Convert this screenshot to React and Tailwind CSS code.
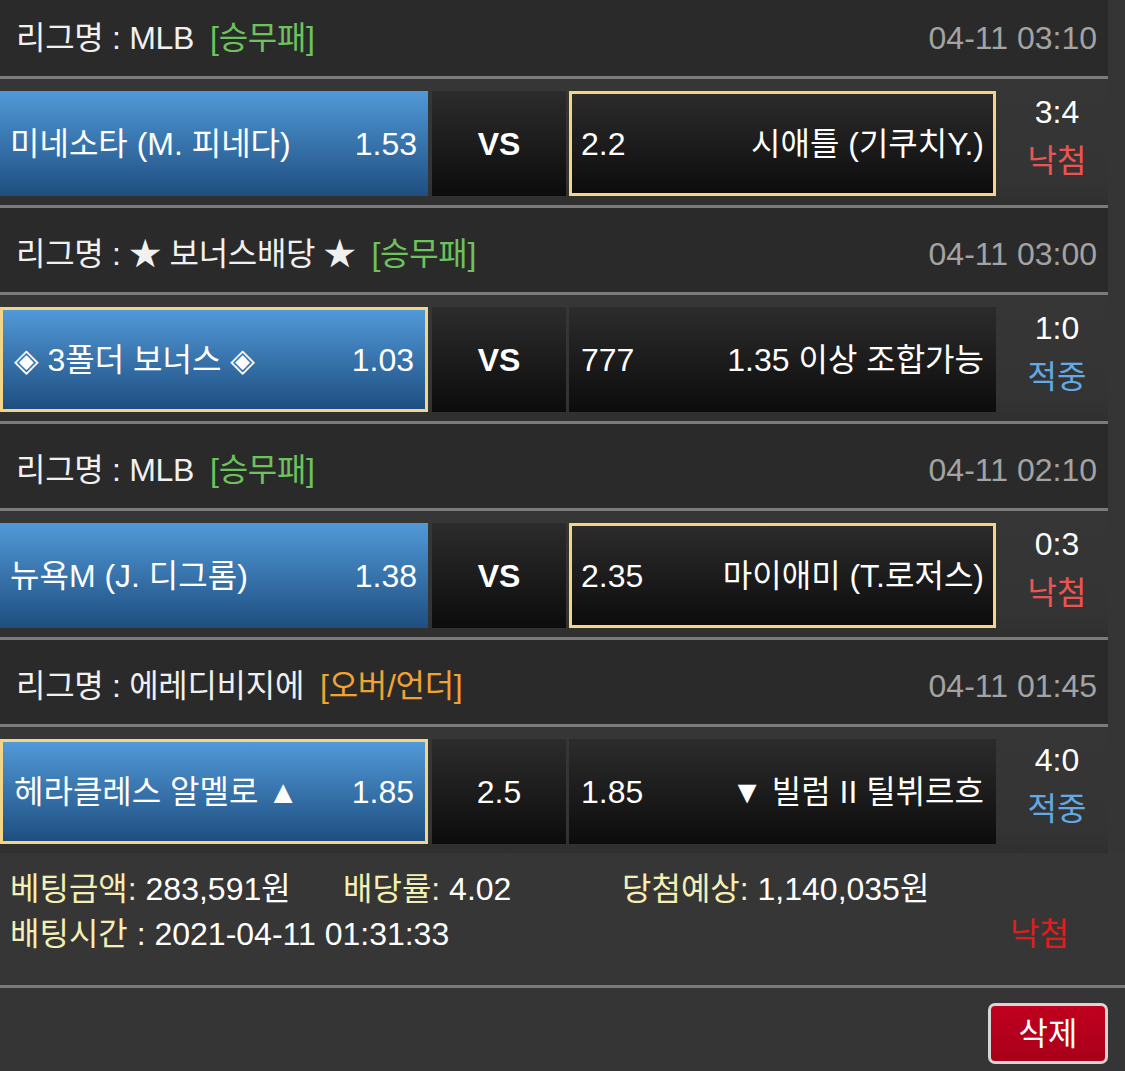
import React from "react";

const matches = [
  {
    league: "MLB",
    type: "[승무패]",
    typeColor: "text-[#6cc35c]",
    date: "04-11 03:10",
    home: "미네소타 (M. 피네다)",
    homeOdd: "1.53",
    mid: "VS",
    awayOdd: "2.2",
    away: "시애틀 (기쿠치Y.)",
    pick: "away",
    score: "3:4",
    result: "낙첨",
  },
  {
    league: "★ 보너스배당 ★",
    type: "[승무패]",
    typeColor: "text-[#6cc35c]",
    date: "04-11 03:00",
    home: "◈ 3폴더 보너스 ◈",
    homeOdd: "1.03",
    mid: "VS",
    awayOdd: "777",
    away: "1.35 이상 조합가능",
    pick: "home",
    score: "1:0",
    result: "적중",
  },
  {
    league: "MLB",
    type: "[승무패]",
    typeColor: "text-[#6cc35c]",
    date: "04-11 02:10",
    home: "뉴욕M (J. 디그롬)",
    homeOdd: "1.38",
    mid: "VS",
    awayOdd: "2.35",
    away: "마이애미 (T.로저스)",
    pick: "away",
    score: "0:3",
    result: "낙첨",
  },
  {
    league: "에레디비지에",
    type: "[오버/언더]",
    typeColor: "text-[#f0a332]",
    date: "04-11 01:45",
    home: "헤라클레스 알멜로 ▲",
    homeOdd: "1.85",
    mid: "2.5",
    awayOdd: "1.85",
    away: "▼ 빌럼 II 틸뷔르흐",
    pick: "home",
    score: "4:0",
    result: "적중",
  },
];

function Section({ m, last }) {
  const homeSel = m.pick === "home";
  const awaySel = m.pick === "away";
  return (
    <div>
      <div className="flex h-[84px] items-center justify-between bg-[#2a2a2a] pl-4 pr-[11px] pt-2">
        <div className="tracking-[-0.3px] text-[#f0f0f0]">
          리그명 : {m.league}
          <span className={`ml-4 ${m.typeColor}`}>{m.type}</span>
        </div>
        <div className="text-[#a3a3a3]">{m.date}</div>
      </div>
      <div className="h-[3px] bg-[#7b7b7b]" />
      <div className="flex h-[126px] items-start bg-[linear-gradient(#363636,#343434_80%,#2f2f2f)]">
        <div
          className={`mt-3 flex h-[105px] w-[428px] items-center justify-between bg-[linear-gradient(#5199d8,#1e4e80)] text-white ${
            homeSel ? "border-[3px] border-[#f3d587] pl-[11px] pr-[11px]" : "pl-[10px] pr-[11px]"
          }`}
        >
          <span>{m.home}</span>
          <span>{m.homeOdd}</span>
        </div>
        <div
          className={`ml-1 mt-3 flex h-[105px] w-[134px] items-center justify-center bg-[linear-gradient(#2c2c2c,#0c0c0c)] text-white ${
            m.mid === "VS" ? "font-bold" : ""
          }`}
        >
          {m.mid}
        </div>
        <div
          className={`ml-[3px] mt-3 flex h-[105px] w-[427px] items-center justify-between bg-[linear-gradient(#2c2c2c,#0c0c0c)] text-white ${
            awaySel ? "border-[3px] border-[#f3d587] px-[9px]" : "px-3"
          }`}
        >
          <span>{m.awayOdd}</span>
          <span>{m.away}</span>
        </div>
        <div className="flex w-[112px] flex-col items-center pl-[10px] pt-[10px] leading-[46px]">
          <span className="text-white">{m.score}</span>
          <span className={`mt-[3px] ${m.result === "낙첨" ? "text-[#ec5454]" : "text-[#63a9e3]"}`}>{m.result}</span>
        </div>
      </div>
      {!last && <div className="h-[3px] bg-[#7b7b7b]" />}
    </div>
  );
}

export default function App() {
  return (
    <div
      className="h-[1071px] w-[1125px] overflow-hidden bg-[#353535] text-[32px] leading-none"
      style={{ fontFamily: '"Liberation Sans", "Noto Sans CJK KR", "DejaVu Sans", sans-serif' }}
    >
      <div className="-mt-2 w-[1108px]">
        {matches.map((m, i) => (
          <Section key={i} m={m} last={i === matches.length - 1} />
        ))}
      </div>
      <div className="bg-[#363636] pb-[28px] pl-[10px] pt-[14px] leading-[45px]">
        <div className="flex">
          <div className="w-[333px]">
            <span className="text-[#f4efb4]">베팅금액</span>
            <span className="text-[#f4efb4]">:</span>
            <span className="text-white"> 283,591원</span>
          </div>
          <div className="w-[279px]">
            <span className="text-[#f4efb4]">배당률</span>
            <span className="text-[#f4efb4]">:</span>
            <span className="text-white"> 4.02</span>
          </div>
          <div>
            <span className="text-[#f4efb4]">당첨예상</span>
            <span className="text-[#f4efb4]">:</span>
            <span className="text-white"> 1,140,035원</span>
          </div>
        </div>
        <div className="flex justify-between pr-[56px]">
          <div>
            <span className="text-[#f4efb4]">배팅시간</span>
            <span className="text-white"> : 2021-04-11 01:31:33</span>
          </div>
          <span className="text-[#e21c1c]">낙첨</span>
        </div>
      </div>
      <div className="h-[3px] bg-[#7b7b7b]" />
      <div className="flex justify-end pr-[17px] pt-[15px]">
        <button className="flex h-[61px] w-[120px] items-center justify-center rounded-[7px] border-[3px] border-[#d6d6d6] bg-[linear-gradient(#c0001f,#a8001a)] text-white">
          삭제
        </button>
      </div>
    </div>
  );
}
